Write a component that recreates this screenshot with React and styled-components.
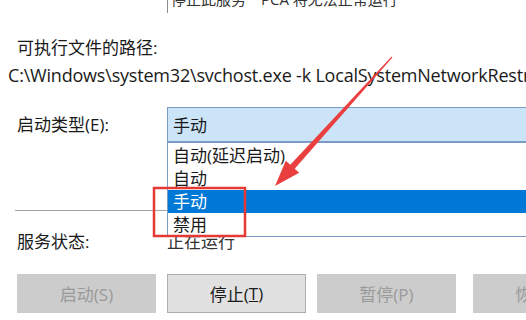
import React from "react";
import styled, { createGlobalStyle } from "styled-components";

const GlobalStyle = createGlobalStyle`
	html, body {
		margin: 0;
		padding: 0;
		background: #ffffff;
		overflow: hidden;
	}
	body {
		font-family: "Open Sans", "Noto Sans CJK SC", sans-serif;
		font-size: 17px;
		color: #1a1a1a;
	}
`;

const Page = styled.div`
	position: relative;
	width: 526px;
	height: 320px;
	overflow: hidden;
	padding-left: 17px;
	box-sizing: border-box;
`;

const DescClip = styled.div`
	margin-left: 150px;
	height: 13px;
	overflow: hidden;
	border-left: 1px solid #8a8a8a;
	padding-left: 3px;
`;

const DescText = styled.div`
	margin-top: -11px;
	font-size: 15px;
	line-height: 20px;
	white-space: nowrap;
	color: #333;
`;

const Label = styled.div`
	line-height: 20px;
	white-space: nowrap;
	margin-top: ${props => props.top || 0}px;
`;

const PathText = styled.div`
	margin-left: -9px;
	font-size: 18px;
	letter-spacing: -0.2px;
	line-height: 20px;
	white-space: nowrap;
	margin-top: 7px;
`;

const Row = styled.div`
	display: flex;
	align-items: center;
	margin-top: ${props => props.top || 0}px;
`;

const RowLabel = styled.div`
	width: 150px;
	flex: none;
	line-height: 20px;
	white-space: nowrap;
`;

const Combo = styled.div`
	position: relative;
	flex: none;
	width: 400px;
	height: 35px;
	box-sizing: border-box;
	border: 1px solid #7a9cc6;
	background: #cce4f7;
	padding-left: 5px;
	display: flex;
	align-items: center;
	z-index: 2;
`;

const DropList = styled.div`
	position: absolute;
	left: -1px;
	top: 34px;
	width: 400px;
	box-sizing: border-box;
	border: 1px solid #7a9cc6;
	background: #ffffff;
	padding: 1px 0 0;
`;

const Item = styled.div`
	height: 23px;
	line-height: 23px;
	padding-left: 5px;
	white-space: nowrap;
	background: ${props => (props.active ? "#0078d7" : "transparent")};
	color: ${props => (props.active ? "#ffffff" : "#1a1a1a")};
`;

const Separator = styled.div`
	width: 152px;
	height: 1px;
	background: #a5a5a5;
	margin-top: 68px;
	margin-left: -2px;
`;

const StatusRow = styled.div`
	display: flex;
	margin-top: 21px;
	line-height: 20px;
`;

const StatusValue = styled.div`
	color: #333;
`;

const Buttons = styled.div`
	display: flex;
	gap: 11px;
	margin-top: 22px;
`;

const Button = styled.div`
	flex: none;
	width: 139px;
	height: 39px;
	box-sizing: border-box;
	display: flex;
	align-items: center;
	justify-content: center;
	background: ${props => (props.disabled ? "#cccccc" : "#e1e1e1")};
	border: 1px solid ${props => (props.disabled ? "#cccccc" : "#adadad")};
	color: ${props => (props.disabled ? "#9a9a9a" : "#1a1a1a")};
	white-space: nowrap;
	margin-left: ${props => props.shift || 0}px;
`;

const Overlay = styled.svg`
	position: absolute;
	left: 0;
	top: 0;
	pointer-events: none;
	z-index: 5;
`;

export default function App() {
	return (
		<>
			<GlobalStyle />
			<Page>
				<DescClip>
					<DescText>停止此服务　PCA 将无法正常运行</DescText>
				</DescClip>
				<Label top={25}>可执行文件的路径:</Label>
				<PathText>C:\Windows\system32\svchost.exe -k LocalSystemNetworkRestricted -p</PathText>
				<Row top={22}>
					<RowLabel>启动类型(E):</RowLabel>
					<Combo>
						手动
						<DropList>
							<Item>自动(延迟启动)</Item>
							<Item>自动</Item>
							<Item active>手动</Item>
							<Item>禁用</Item>
						</DropList>
					</Combo>
				</Row>
				<Separator />
				<StatusRow>
					<RowLabel>服务状态:</RowLabel>
					<StatusValue>正在运行</StatusValue>
				</StatusRow>
				<Buttons>
					<Button disabled>启动(S)</Button>
					<Button>停止(<u>T</u>)</Button>
					<Button disabled>暂停(P)</Button>
					<Button disabled shift={6}>恢复(R)</Button>
				</Buttons>
				<Overlay width="526" height="320" viewBox="0 0 526 320">
					<rect x="154" y="188" width="91" height="48" fill="none" stroke="#e53935" strokeWidth="2.5" />
					<polygon
						points="275,186 285.8,160.7 290.3,164.7 391.6,56.6 392.4,57.4 294.7,168.7 299.2,172.7"
						fill="#ea3f3f"
					/>
				</Overlay>
			</Page>
		</>
	);
}
